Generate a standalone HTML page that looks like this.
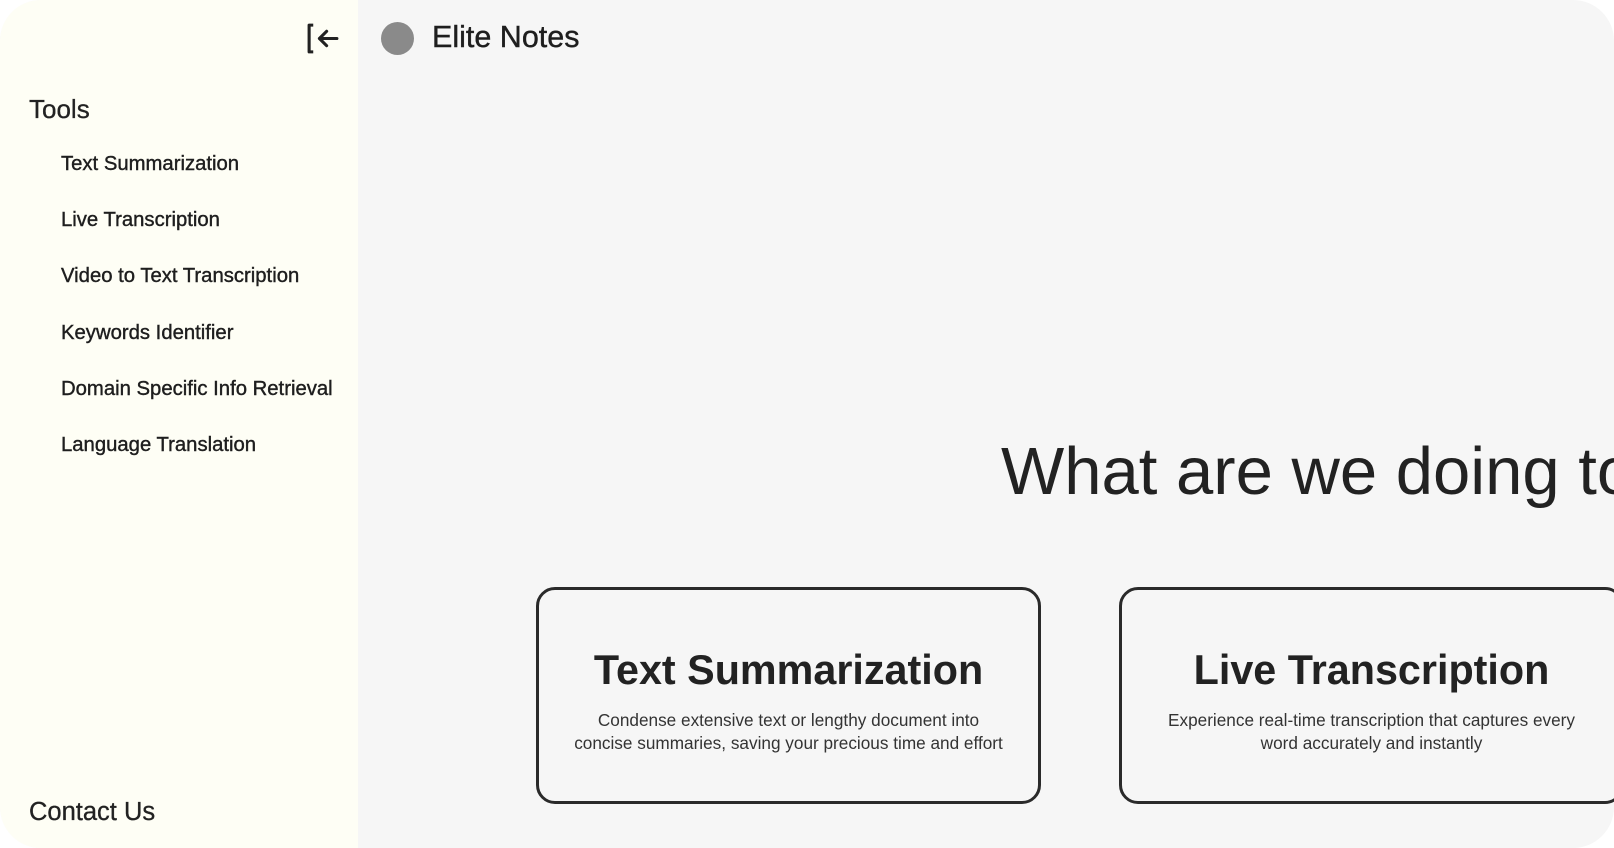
<!DOCTYPE html>
<html><head><meta charset="utf-8"><style>
html,body{margin:0;padding:0;background:#fff;}
body{width:1614px;height:848px;overflow:hidden;font-family:"Liberation Sans",sans-serif;color:#222;}
.frame{position:absolute;left:0;top:0;width:1614px;height:848px;border-radius:41px;overflow:hidden;background:#f6f6f6;}
.side{position:absolute;left:0;top:0;width:358px;height:848px;background:#fefef5;}
.t{position:absolute;white-space:nowrap;}
.tools{left:29px;top:94px;font-size:26px;-webkit-text-stroke:0.3px #222;}
.item{left:61px;font-size:20.3px;color:#1e1e1e;-webkit-text-stroke:0.4px #1e1e1e;}
.card{position:absolute;top:587px;width:499px;height:211px;border:3px solid #2a2a2a;border-radius:19px;text-align:center;}
.card h2{margin:0;position:absolute;top:57px;left:0;right:0;font-size:41.3px;font-weight:bold;color:#222;}
.card p{margin:0;position:absolute;top:119px;left:0;right:0;font-size:17.2px;line-height:22.5px;color:#333;}
</style></head><body>
<div class="frame">
<div class="side">
<svg style="position:absolute;left:305px;top:22px" width="35" height="33" viewBox="0 0 34 32"><path d="M8 3H4v26h4" fill="none" stroke="#222" stroke-width="3" stroke-linejoin="round"/><path d="M31 16H14M21 9l-7 7 7 7" fill="none" stroke="#222" stroke-width="3" stroke-linecap="round" stroke-linejoin="round"/></svg>
<div class="t tools">Tools</div>
<div class="t item" style="top:153px">Text Summarization</div>
<div class="t item" style="top:209px">Live Transcription</div>
<div class="t item" style="top:265px">Video to Text Transcription</div>
<div class="t item" style="top:322px">Keywords Identifier</div>
<div class="t item" style="top:378px">Domain Specific Info Retrieval</div>
<div class="t item" style="top:434px">Language Translation</div>
<div class="t" style="left:29px;top:798px;font-size:25.5px;-webkit-text-stroke:0.3px #222">Contact Us</div>
</div>
<div style="position:absolute;left:381px;top:22px;width:33px;height:33px;border-radius:50%;background:#8a8a8a"></div>
<div class="t" style="left:432px;top:20px;font-size:30.5px;color:#1e1e1e;-webkit-text-stroke:0.4px #1e1e1e">Elite Notes</div>
<div class="t" style="left:1001px;top:433px;font-size:67px;color:#222">What are we doing today?</div>
<div class="card" style="left:536px"><h2>Text Summarization</h2><p>Condense extensive text or lengthy document into<br>concise summaries, saving your precious time and effort</p></div>
<div class="card" style="left:1119px"><h2>Live Transcription</h2><p>Experience real-time transcription that captures every<br>word accurately and instantly</p></div>
</div>
</body></html>
